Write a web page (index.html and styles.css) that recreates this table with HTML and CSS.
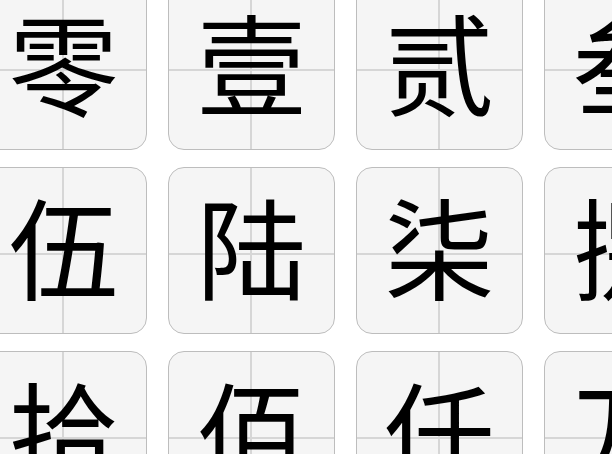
FILE: index.html
```html
<!DOCTYPE html>
<html lang="zh-CN">
<head>
<meta charset="utf-8">
<title>大写数字</title>
<link rel="stylesheet" href="styles.css">
</head>
<body>
<div class="grid">
  <div class="card"><span class="ch">零</span></div>
  <div class="card"><span class="ch">壹</span></div>
  <div class="card"><span class="ch">贰</span></div>
  <div class="card"><span class="ch">叁</span></div>
  <div class="card"><span class="ch">肆</span></div>
  <div class="card"><span class="ch">伍</span></div>
  <div class="card"><span class="ch">陆</span></div>
  <div class="card"><span class="ch">柒</span></div>
  <div class="card"><span class="ch">捌</span></div>
  <div class="card"><span class="ch">玖</span></div>
  <div class="card"><span class="ch">拾</span></div>
  <div class="card"><span class="ch">佰</span></div>
  <div class="card"><span class="ch">仟</span></div>
  <div class="card"><span class="ch">万</span></div>
  <div class="card"><span class="ch">亿</span></div>
</div>
</body>
</html>
```
FILE: styles.css
```css
html, body {
  margin: 0;
  padding: 0;
  background: #ffffff;
  overflow: hidden;
}
body {
  width: 612px;
  height: 454px;
}
.grid {
  display: grid;
  grid-template-columns: repeat(5, 167px);
  grid-auto-rows: 167px;
  column-gap: 21px;
  row-gap: 17px;
  margin-left: -20px;
  margin-top: -17px;
}
.card {
  position: relative;
  box-sizing: border-box;
  border: 1.5px solid #bdbdbd;
  border-radius: 16px;
  background: #f5f5f5;
  display: flex;
  align-items: center;
  justify-content: center;
}
.card::before,
.card::after {
  content: "";
  position: absolute;
  background: #d6d6d6;
}
.card::before {
  left: 81px;
  top: 0;
  bottom: 0;
  width: 1.5px;
}
.card::after {
  top: 85px;
  left: 0;
  right: 0;
  height: 1.5px;
}
.ch {
  position: relative;
  z-index: 1;
  margin-bottom: 14px;
  font-family: "Noto Sans CJK SC", sans-serif;
  font-size: 110px;
  font-weight: 400;
  line-height: 1;
  color: #000000;
}
```
